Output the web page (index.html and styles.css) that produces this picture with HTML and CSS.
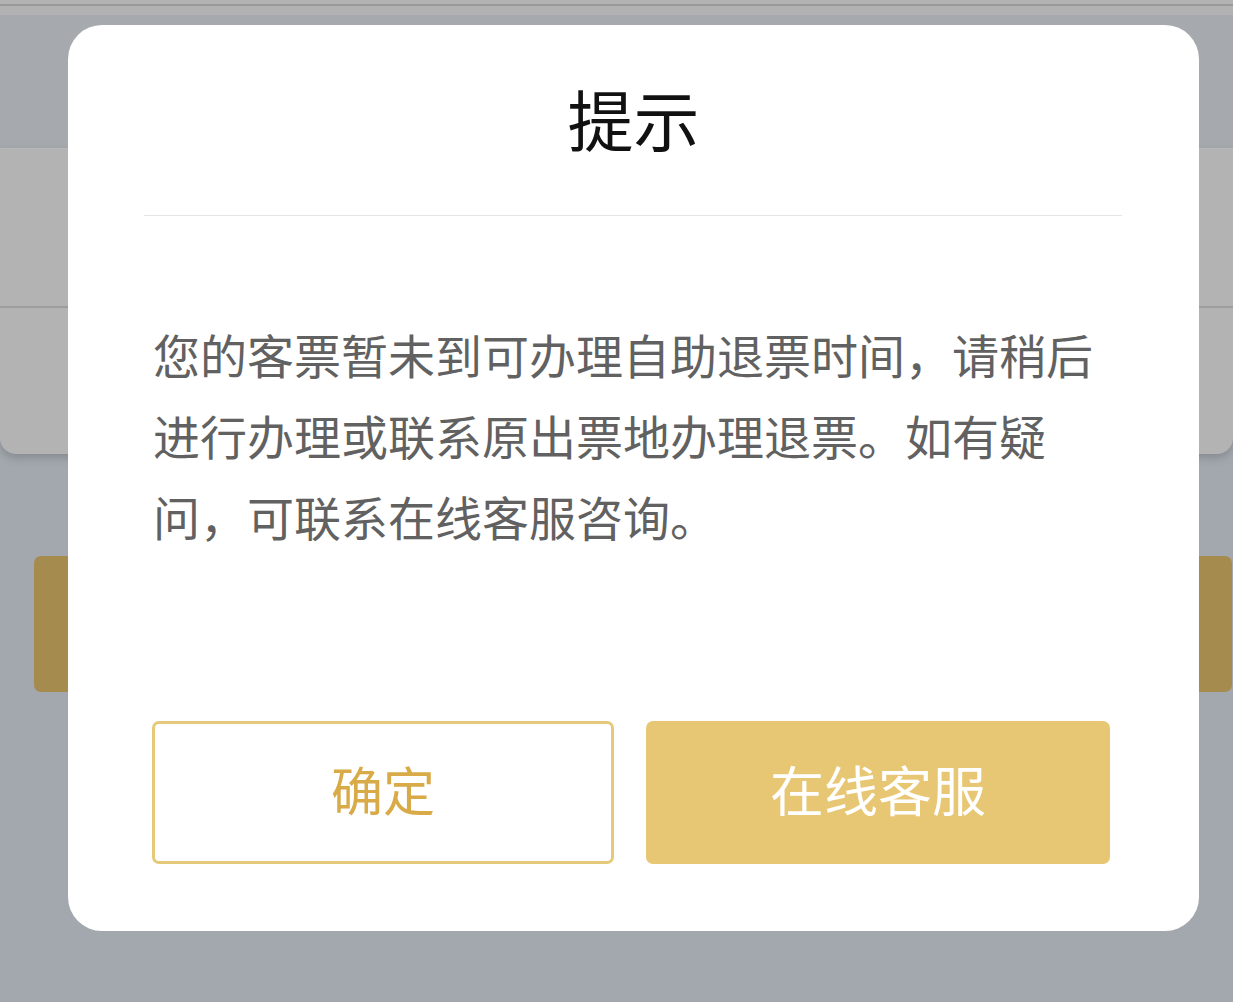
FILE: index.html
```html
<!DOCTYPE html>
<html lang="zh-CN">
<head>
<meta charset="utf-8">
<title>提示</title>
<link rel="stylesheet" href="styles.css">
</head>
<body>
<div class="page">
  <div class="topbar"></div>
  <div class="header"></div>
  <div class="card">
    <div class="card-row card-row-first"></div>
    <div class="card-row"></div>
  </div>
  <div class="action"></div>
</div>

<div class="modal">
  <div class="modal-title">提示</div>
  <div class="modal-divider"></div>
  <div class="modal-body">您的客票暂未到可办理自助退票时间，请稍后进行办理或联系原出票地办理退票。如有疑问，可联系在线客服咨询。</div>
  <div class="modal-actions">
    <div class="btn btn-outline">确定</div>
    <div class="btn btn-solid">在线客服</div>
  </div>
</div>
</body>
</html>
```

FILE: styles.css
```css
html, body {
  margin: 0;
  padding: 0;
}
body {
  width: 1233px;
  height: 1002px;
  overflow: hidden;
  background: #a3a8ae;
  font-family: "Noto Sans CJK SC", "Noto Sans", sans-serif;
  position: relative;
}
.page {
  display: flex;
  flex-direction: column;
}
.topbar {
  height: 15px;
  background: linear-gradient(to bottom, #b3b3b3 0, #b3b3b3 4px, #9a9a9a 4px, #9a9a9a 6px, #b2b2b2 6px, #b2b2b2 15px);
}
.header {
  height: 133px;
  background: #a6a9ad;
}
.card {
  height: 305px;
  background: #b3b3b3;
  border-top: 1px solid #b6b7b8;
  border-radius: 0 0 16px 16px;
  box-shadow: 0 4px 8px rgba(80, 85, 95, 0.35);
  display: flex;
  flex-direction: column;
}
.card-row {
  flex: 1;
}
.card-row-first {
  flex: none;
  height: 157px;
}
.card-row + .card-row {
  border-top: 2px solid #9e9e9e;
}
.action {
  margin: 102px 1px 0 34px;
  height: 136px;
  background: #a68b4f;
  border-radius: 7px;
}
.modal {
  position: absolute;
  top: 25px;
  left: 68px;
  width: 1131px;
  height: 906px;
  background: #ffffff;
  border-radius: 34px;
  display: flex;
  flex-direction: column;
}
.modal-title {
  height: 190px;
  padding-bottom: 6px;
  box-sizing: border-box;
  display: flex;
  align-items: center;
  justify-content: center;
  font-size: 66px;
  color: #111111;
}
.modal-divider {
  height: 1px;
  margin: 0 77px 0 76px;
  background: #e6e6e6;
}
.modal-body {
  margin-top: 97px;
  padding: 0 77px 0 85px;
  font-size: 47px;
  line-height: 81px;
  color: #616161;
}
.modal-actions {
  margin-top: auto;
  padding: 0 0 67px 84px;
  display: flex;
  gap: 32px;
}
.btn {
  flex: none;
  height: 143px;
  padding-bottom: 8px;
  box-sizing: border-box;
  border-radius: 7px;
  display: flex;
  align-items: center;
  justify-content: center;
}
.btn-outline {
  width: 462px;
  border: 3px solid #e5c97a;
  color: #d8aa48;
  font-size: 52px;
}
.btn-solid {
  width: 464px;
  background: #e8c774;
  color: #ffffff;
  font-size: 54px;
}
```
